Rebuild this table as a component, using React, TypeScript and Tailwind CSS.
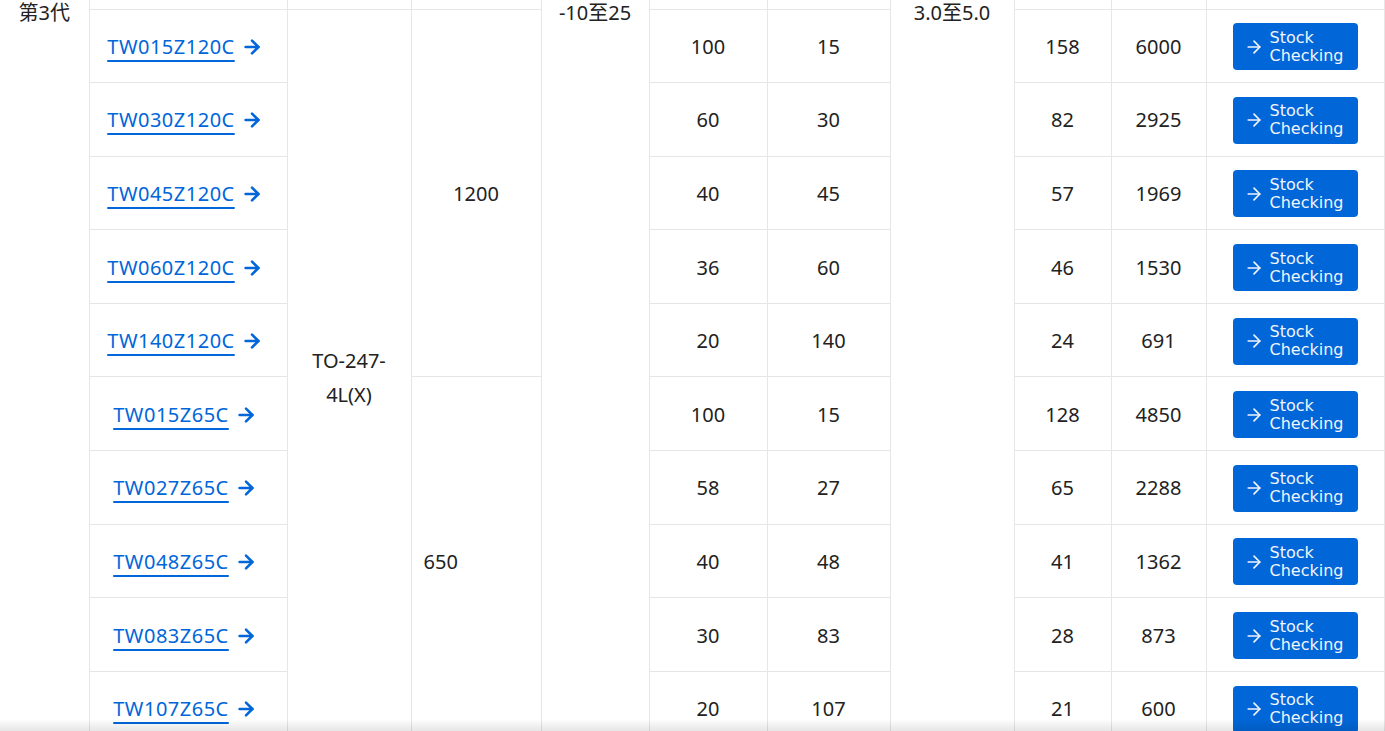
import { ArrowRight } from "lucide-react";

type Row = { part: string; a: string; b: string; c: string; d: string };

const rows: Row[] = [
  { part: "TW015Z120C", a: "100", b: "15", c: "158", d: "6000" },
  { part: "TW030Z120C", a: "60", b: "30", c: "82", d: "2925" },
  { part: "TW045Z120C", a: "40", b: "45", c: "57", d: "1969" },
  { part: "TW060Z120C", a: "36", b: "60", c: "46", d: "1530" },
  { part: "TW140Z120C", a: "20", b: "140", c: "24", d: "691" },
  { part: "TW015Z65C", a: "100", b: "15", c: "128", d: "4850" },
  { part: "TW027Z65C", a: "58", b: "27", c: "65", d: "2288" },
  { part: "TW048Z65C", a: "40", b: "48", c: "41", d: "1362" },
  { part: "TW083Z65C", a: "30", b: "83", c: "28", d: "873" },
  { part: "TW107Z65C", a: "20", b: "107", c: "21", d: "600" },
];

const cell = "border border-[#e6e6e6] pt-[2px] text-center align-middle";

function StockButton() {
  return (
    <button className="mx-auto flex h-[47px] w-[125px] items-center gap-[6px] rounded-[4px] bg-[#0166d7] pl-[11px] text-left text-[16px] leading-[18px] text-[#f0f5ff] [font-family:'DejaVu_Sans',sans-serif]">
      <ArrowRight size={20} strokeWidth={2} />
      <span>
        Stock
        <br />
        Checking
      </span>
    </button>
  );
}

export default function App() {
  return (
    <div className="relative h-[731px] w-[1385px] overflow-hidden bg-white text-[20px] leading-[34px] text-[#222] [font-family:'Noto_Sans','Noto_Sans_CJK_SC',sans-serif]">
      <table className="w-[1384px] table-fixed border-collapse">
        <colgroup>
          <col className="w-[89px]" />
          <col className="w-[198px]" />
          <col className="w-[124px]" />
          <col className="w-[130px]" />
          <col className="w-[108px]" />
          <col className="w-[118px]" />
          <col className="w-[123px]" />
          <col className="w-[124px]" />
          <col className="w-[97px]" />
          <col className="w-[95px]" />
          <col className="w-[178px]" />
        </colgroup>
        <tbody>
          <tr className="h-[9px]">
            <td rowSpan={11} className="border-0 p-0 pt-[1px] text-center align-top leading-[24px]">
              第3代
            </td>
            <td className="border border-t-0 border-[#e6e6e6] p-0" />
            <td className="border border-t-0 border-[#e6e6e6] p-0" />
            <td className="border border-t-0 border-[#e6e6e6] p-0" />
            <td rowSpan={11} className="border border-t-0 border-[#e6e6e6] p-0 pt-[1px] text-center align-top leading-[24px]">
              -10至25
            </td>
            <td className="border border-t-0 border-[#e6e6e6] p-0" />
            <td className="border border-t-0 border-[#e6e6e6] p-0" />
            <td rowSpan={11} className="border border-t-0 border-[#e6e6e6] p-0 pt-[1px] text-center align-top leading-[24px]">
              3.0至5.0
            </td>
            <td className="border border-t-0 border-[#e6e6e6] p-0" />
            <td className="border border-t-0 border-[#e6e6e6] p-0" />
            <td className="border border-t-0 border-[#e6e6e6] p-0" />
          </tr>
          {rows.map((r, i) => (
            <tr key={r.part} className="h-[73.6px]">
              <td className={`${cell} pr-[6px]`}>
                <a href="#" className="inline-flex items-center gap-[6px] text-[#0066d9]">
                  <span className="tracking-[0.5px] underline decoration-2 underline-offset-[6px]">{r.part}</span>
                  <ArrowRight size={22} strokeWidth={2.8} />
                </a>
              </td>
              {i === 0 && (
                <td rowSpan={10} className={`${cell} px-[12px]`}>
                  TO-247-4L(X)
                </td>
              )}
              {i === 0 && (
                <td rowSpan={5} className={cell}>
                  1200
                </td>
              )}
              {i === 5 && (
                <td rowSpan={5} className={`${cell} pl-[12px] text-left`}>
                  650
                </td>
              )}
              <td className={cell}>{r.a}</td>
              <td className={cell}>{r.b}</td>
              <td className={cell}>{r.c}</td>
              <td className={cell}>{r.d}</td>
              <td className={cell}>
                <StockButton />
              </td>
            </tr>
          ))}
        </tbody>
      </table>
      <div className="pointer-events-none absolute bottom-0 left-0 h-[12px] w-full bg-gradient-to-b from-transparent to-black/10" />
    </div>
  );
}
